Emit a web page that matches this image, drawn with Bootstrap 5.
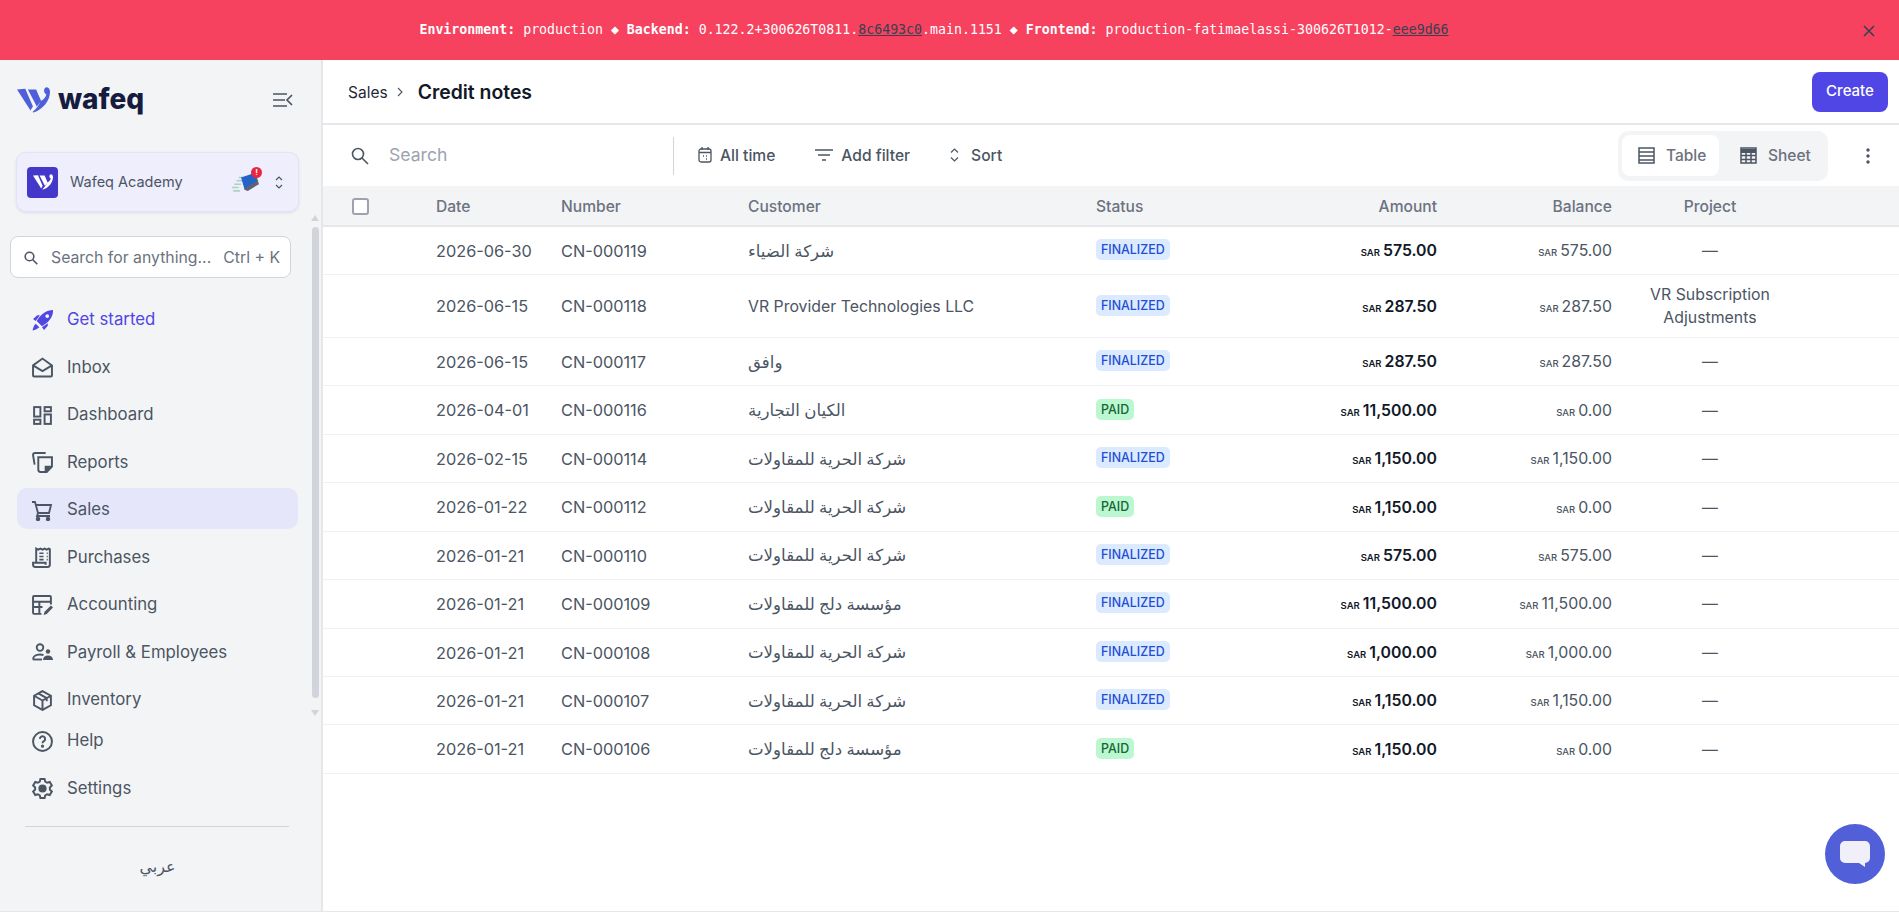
<!DOCTYPE html>
<html lang="en">
<head>
  <meta charset="UTF-8" />
  <meta name="viewport" content="width=device-width, initial-scale=1.0" />
  <title>Credit notes - wafeq</title>
  <link href="https://cdn.jsdelivr.net/npm/bootstrap@5.3.3/dist/css/bootstrap.min.css" rel="stylesheet">
  <style>
    html, body { height: 100%; overflow: hidden; }
    body { font-family: Inter, "Noto Sans", sans-serif; font-size: 15px; color: #374151; background: #fff; }
    svg { flex-shrink: 0; display: block; }

    .env-bar { height: 60px; background: #f6415f; color: #fff; font-family: "DejaVu Sans Mono", monospace; font-size: 13.25px; padding-right: 31px; }
    .env-bar a { color: #374151; }
    .env-close { right: 23px; top: 24px; }

    .app-body { height: 852px; border-bottom: 1px solid #e5e7eb; }
    .side { width: 323px; background: #f3f4f6; border-right: 2px solid #e5e7eb; }
    .brand-row { height: 76px; padding: 4px 28px 0 17px; }
    .brand-name { font-size: 28px; font-weight: 800; color: #151c3f; line-height: 1; font-family: Inter, sans-serif; margin-top: -3px; }
    .org-box { margin: 16px 0 0 16px; width: 283px; height: 60px; background: #eeeefd; border: 1px solid #e2e3f8; border-radius: 10px; padding: 0 15px 0 10px; box-shadow: 0 1px 3px rgba(30,30,80,.1); font-size: 14.5px; color: #4b5563; }
    .org-logo { width: 31px; height: 31px; border-radius: 4px; background: #4338ca; }
    .org-alert { width: 11px; height: 11px; border-radius: 50%; background: #e5273f; color: #fff; font-size: 8px; font-weight: 700; line-height: 11px; text-align: center; top: -6px; right: -3px; }
    .find-box { margin: 24px 0 0 10px; width: 281px; height: 42px; background: #fff; border: 1px solid #d1d5db; border-radius: 8px; padding: 2px 10px 0 13px; color: #6b7280; font-size: 15.8px; white-space: nowrap; }
    .find-box span:first-of-type { margin-left: 5px; }
    .nav-scroll { height: 421px; margin-top: 20px; }
    .side-link { height: 41px; margin: 0 23px 6.5px 17px; padding: 3px 0 0 15px; gap: 14px; border-radius: 10px; color: #4b5563; font-size: 16.8px; text-decoration: none; }
    .side-link svg { width: 21px; height: 21px; color: #4b5563; stroke-width: 1.85; }
    .side-link.is-accent, .side-link.is-accent svg { color: #4f46e5; }
    .side-link.is-open { background: #e6e6fb; }
    .side-track { position: absolute; right: 2px; top: 155px; width: 7px; height: 501px; }
    .side-thumb { position: absolute; left: 0; top: 12px; width: 7px; height: 471px; background: #d1d5db; border-radius: 4px; }
    .side-up, .side-down { position: absolute; left: -1px; width: 0; height: 0; border-left: 4.5px solid transparent; border-right: 4.5px solid transparent; }
    .side-up { top: 0; border-bottom: 6px solid #d1d5db; }
    .side-down { top: 495px; border-top: 6px solid #d1d5db; }
    .side-rule { margin: 18px 32px 0 25px; border-top: 1px solid #d1d5db; }
    .lang-link { margin: 27px 6px 0 0; font-size: 16px; color: #4b5563; font-family: "Noto Sans", "DejaVu Sans", sans-serif; }

    .main-pane { width: 1576px; }
    .page-head { height: 65px; border-bottom: 2px solid #e5e7eb; padding: 2px 11px 0 25px; }
    .crumb-root { font-size: 15.5px; color: #1f2937; }
    .crumb-now { font-size: 19.4px; font-weight: 600; color: #111827; margin-left: 6px; }
    .create-btn { width: 76px; height: 40px; background: #4f46e5; border: 0; border-radius: 8px; color: #fff; font-size: 15px; font-weight: 500; padding: 0; margin-top: -2px; }
    .tool-row { height: 61px; padding: 0 20px 0 28px; }
    .tool-search { width: 323px; height: 38px; border-right: 1px solid #d1d5db; color: #9ca3af; font-size: 17.6px; }
    .tool-btn { font-size: 15.6px; font-weight: 500; color: #4b5563; }
    .view-switch { background: #f3f4f6; border-radius: 10px; padding: 4px; width: 210px; height: 50px; }
    .view-tab { height: 41px; padding: 0 16px; gap: 11px; border-radius: 8px; font-size: 15.5px; font-weight: 500; color: #6b7280; }
    .view-tab.is-on { background: #fff; width: 97px; margin-right: 5px; }
    .view-tab svg { color: #4b5563; }
    .more-dots { margin: 0 9px 0 38px; }

    .notes-table { table-layout: fixed; width: 1576px; margin: 0; color: #4b5563; }
    .notes-table th { height: 40px; background: #f3f4f6; border-bottom: 2px solid #e5e7eb; padding: 2px 12px 0; font-size: 15.6px; font-weight: 500; color: #6b7280; vertical-align: middle; }
    .notes-table td { height: 48.45px; padding: 1px 12px 0; border-bottom: 1px solid #f0f1f3; font-size: 15.85px; vertical-align: middle; color: #4b5563; }
    .notes-table .row-tall td { height: 63px; }
    .notes-table .ar-name { font-family: "Noto Sans", "DejaVu Sans", sans-serif; font-size: 16.6px; }
    .notes-table .num-code { font-size: 16.3px; }
    .c1 { width: 101px; } .c2 { width: 125px; } .c3 { width: 187px; } .c4 { width: 348px; } .c5 { width: 125px; }
    .c6 { width: 240px; } .c7 { width: 175px; } .c8 { width: 172px; } .c9 { width: 103px; }
    .pick-box { display: block; width: 17px; height: 17px; margin-left: 17px; border: 2px solid #9ca3af; border-radius: 3px; background: #fff; }
    .cur-tag { font-size: 9.5px; font-weight: 500; margin-right: 3px; }
    .notes-table .money-strong { font-weight: 600; color: #111827; }
    .money-strong .cur-tag { color: #111827; font-weight: 600; }
    .state-tag { display: inline-block; font-size: 12.4px; font-weight: 500; line-height: 21px; padding: 0 5px; border-radius: 5px; transform: translateY(-2px); }
    .state-final { background: #dbeafe; color: #1d4ed8; }
    .state-paid { background: #bbf7d0; color: #166534; }
    .chat-fab { position: fixed; right: 14px; bottom: 28px; width: 60px; height: 60px; background: #5160d8; border-radius: 50%; }
  </style>
</head>
<body>

<div class="env-bar d-flex align-items-center justify-content-center position-relative">
  <div><b>Environment:</b> production ◆ <b>Backend:</b> 0.122.2+300626T0811.<a href="#">8c6493c0</a>.main.1151 ◆ <b>Frontend:</b> production-fatimaelassi-300626T1012-<a href="#">eee9d66</a></div>
  <svg class="env-close position-absolute" width="14" height="14" viewBox="0 0 14 14" fill="none" stroke="#374151" stroke-width="1.6"><path d="M2 2l10 10M12 2L2 12"/></svg>
</div>

<div class="app-body d-flex">
  <aside class="side d-flex flex-column flex-shrink-0 position-relative">
    <div class="brand-row d-flex align-items-center justify-content-between">
      <div class="d-flex align-items-center gap-2">
        <svg width="33" height="26" viewBox="0 0 100 78" fill="#4f5fd9"><path d="M0 7l25-2 23 53-7 13z"/><path d="M33 7h25l15 35-13 17z"/><path d="M88 0c8 0 12 6 12 14 0 28-22 54-50 63l-3-2c12-10 20-20 24-33 10-4 16-12 18-20-8-4-10-18-1-22z"/></svg>
        <span class="brand-name">wafeq</span>
      </div>
      <svg width="20" height="16" viewBox="0 0 20 16" fill="none" stroke="#4b5563" stroke-width="1.7"><path d="M0 2h14M0 8h12M0 14h14M19 3l-5 5 5 5"/></svg>
    </div>

    <div class="org-box d-flex align-items-center">
      <div class="org-logo d-flex align-items-center justify-content-center">
        <svg width="20" height="16" viewBox="0 0 100 78" fill="#fff"><path d="M0 7l25-2 23 53-7 13z"/><path d="M33 7h25l15 35-13 17z"/><path d="M88 0c8 0 12 6 12 14 0 28-22 54-50 63l-3-2c12-10 20-20 24-33 10-4 16-12 18-20-8-4-10-18-1-22z"/></svg>
      </div>
      <span class="ms-2 ps-1 flex-grow-1">Wafeq Academy</span>
      <div class="position-relative me-3">
        <svg width="27" height="19" viewBox="0 0 24 17"><path d="M0 13h6M1 16h6M2 10h6M4 7h5M6 4h5" stroke="#a7d3c0" stroke-width="1.400"/><path d="M10 6l12-3 2 7-10 6-3-1z" fill="#374151" opacity=".8"/><path d="M8 4l12-4 2 7-11 7z" fill="#2563c9"/></svg>
        <div class="org-alert position-absolute">!</div>
      </div>
      <svg width="8" height="15" viewBox="0 0 8 15" fill="none" stroke="#4b5563" stroke-width="1.2"><path d="M1 5l3-3 3 3M1 10l3 3 3-3"/></svg>
    </div>

    <div class="find-box d-flex align-items-center">
      <svg width="14" height="14" viewBox="0 0 14 14" fill="none" stroke="#4b5563" stroke-width="1.6"><circle cx="5.5" cy="5.5" r="4.3"/><path d="M8.8 8.8l4.5 4.5"/></svg>
      <span class="ps-2 flex-grow-1">Search for anything...</span>
      <span>Ctrl + K</span>
    </div>

    <nav class="nav-scroll overflow-hidden">
      <a class="side-link is-accent d-flex align-items-center" href="#"><svg viewBox="0 0 20 20" fill="currentColor" fill-rule="evenodd"><path d="M20 0c.3 6-3 11-10.500 15.500l-5-5C9 3 14 .2 20 0zM14.500 4a1.800 1.800 0 1 0 .01 0z"/><path d="M1 8.500L5 5h2.500l-4 5.500z"/><path d="M11.500 19l3.500-4v-2.500l-5.500 4z"/><path d="M3.500 13C2 14.500 1 17 .5 19.500c2.500-.5 5-1.500 6.500-3z"/></svg><span>Get started</span></a>
      <a class="side-link d-flex align-items-center" href="#"><svg viewBox="0 0 20 20" fill="none" stroke="currentColor" stroke-width="1.7"><path d="M1 8l9-6.500L19 8v9.500a1 1 0 0 1-1 1H2a1 1 0 0 1-1-1z"/><path d="M1 8l9 5.500L19 8"/></svg><span>Inbox</span></a>
      <a class="side-link d-flex align-items-center" href="#"><svg viewBox="0 0 20 20" fill="none" stroke="currentColor" stroke-width="1.700"><rect x="2" y="2" width="6" height="9"/><rect x="12" y="2" width="6" height="4"/><rect x="2" y="14" width="6" height="4"/><rect x="12" y="9" width="6" height="9"/></svg><span>Dashboard</span></a>
      <a class="side-link d-flex align-items-center" href="#"><svg viewBox="0 0 20 20" fill="none" stroke="currentColor" stroke-width="1.700"><path d="M6 5h13v9l-5 5H8a2 2 0 0 1-2-2z"/><path d="M13 19v-5h6" fill="currentColor"/><path d="M13 1H3a2 2 0 0 0-2 2l1.500 9"/></svg><span>Reports</span></a>
      <a class="side-link is-open d-flex align-items-center" href="#"><svg viewBox="0 0 21 21" fill="none" stroke="currentColor" stroke-width="1.700"><path d="M0 2h3l3 11h11l2-8H4.500"/><path d="M6 13l-1 3h13"/><circle cx="6" cy="19" r="1.300" fill="currentColor"/><circle cx="16" cy="19" r="1.300" fill="currentColor"/></svg><span>Sales</span></a>
      <a class="side-link d-flex align-items-center" href="#"><svg viewBox="0 0 20 20" fill="none" stroke="currentColor" stroke-width="1.700"><path d="M4 15V1.500l2 1 2-1 2 1 2-1 2 1 2-1 1 .5V17a2 2 0 0 1-2 2H3a2 2 0 0 1-2-2v-2h12v2"/><path d="M7 6h4M7 9h4M7 12h4M14 6h1M14 9h1M14 12h1" stroke-width="1.500"/></svg><span>Purchases</span></a>
      <a class="side-link d-flex align-items-center" href="#"><svg viewBox="0 0 20 20" fill="none" stroke="currentColor" stroke-width="1.700"><path d="M9 18H2a1 1 0 0 1-1-1V2a1 1 0 0 1 1-1h15a1 1 0 0 1 1 1v7"/><path d="M1 6.500h17M1 11.500h9M7 6.500V18"/><path d="M11 19l1-3 6-6 2 2-6 6z" fill="currentColor" stroke="none"/></svg><span>Accounting</span></a>
      <a class="side-link d-flex align-items-center" href="#"><svg viewBox="0 0 21 20" fill="none" stroke="currentColor" stroke-width="1.700"><circle cx="8" cy="5" r="3.300"/><path d="M1 17c0-3 3-5 7-5 1.500 0 2.500.2 3.500.6"/><path d="M1 17h9"/><circle cx="16" cy="9" r="2.200" fill="currentColor" stroke="none"/><path d="M11 17.500c0-3 2-4.500 5-4.500s5 1.500 5 4.500z" fill="currentColor" stroke="none"/></svg><span>Payroll &amp; Employees</span></a>
      <a class="side-link d-flex align-items-center" href="#"><svg viewBox="0 0 20 20" fill="none" stroke="currentColor" stroke-width="1.700"><path d="M10 1l8 4.500v9L10 19l-8-4.500v-9z"/><path d="M2 5.500l8 4.500 8-4.500M10 10v9M6 3.300l8 4.500v3"/></svg><span>Inventory</span></a>
    </nav>
    <div class="side-track"><div class="side-up"></div><div class="side-thumb"></div><div class="side-down"></div></div>

    <div class="side-foot">
      <a class="side-link d-flex align-items-center" href="#"><svg viewBox="0 0 20 20" fill="none" stroke="currentColor" stroke-width="1.700"><circle cx="10" cy="10" r="9"/><path d="M7.500 7.500a2.500 2.500 0 1 1 3.800 2.200c-.8.500-1.300 1-1.300 2"/><circle cx="10" cy="14.500" r=".6" fill="currentColor"/></svg><span>Help</span></a>
      <a class="side-link d-flex align-items-center" href="#"><svg viewBox="0 0 20 20" fill="none" stroke="currentColor" stroke-width="1.700"><path d="M8 1h4l.6 2.500 1.800 1 2.500-.7 2 3.400L17 9v2l1.900 1.800-2 3.400-2.500-.7-1.800 1L12 19H8l-.6-2.500-1.800-1-2.500.7-2-3.400L3 11V9L1.100 7.200l2-3.400 2.500.7 1.800-1z"/><circle cx="10" cy="10" r="3" fill="currentColor"/></svg><span>Settings</span></a>
      <div class="side-rule"></div>
      <div class="lang-link text-center" dir="rtl">عربي</div>
    </div>
  </aside>

  <main class="main-pane">
    <div class="page-head d-flex align-items-center justify-content-between">
      <div class="d-flex align-items-center">
        <span class="crumb-root">Sales</span>
        <svg class="mx-2" width="8" height="10" viewBox="0 0 8 10" fill="none" stroke="#4b5563" stroke-width="1.100"><path d="M2 1l4 4-4 4"/></svg>
        <span class="crumb-now">Credit notes</span>
      </div>
      <button class="create-btn" type="button">Create</button>
    </div>

    <div class="tool-row d-flex align-items-center">
      <div class="tool-search d-flex align-items-center">
        <svg width="18" height="18" viewBox="0 0 18 18" fill="none" stroke="#4b5563" stroke-width="1.600"><circle cx="7" cy="7" r="5.500"/><path d="M11 11l6 6"/></svg>
        <span class="ms-3 ps-1">Search</span>
      </div>
      <div class="tool-btn d-flex align-items-center gap-2 ms-4"><svg width="14" height="16" viewBox="0 0 14 16" fill="none" stroke="#4b5563" stroke-width="1.300"><rect x="1" y="2" width="12" height="13" rx="2"/><path d="M1 5.500h12M4 0v3M10 0v3M8 9h1M8 12h1M5 9h1"/></svg><span>All time</span></div>
      <div class="tool-btn d-flex align-items-center gap-2 ms-4 ps-3"><svg width="18" height="12" viewBox="0 0 18 12" fill="none" stroke="#4b5563" stroke-width="1.700"><path d="M0 1h18M3 6h12M7 11h4"/></svg><span>Add filter</span></div>
      <div class="tool-btn d-flex align-items-center gap-2 ms-4 ps-3"><svg width="9" height="14" viewBox="0 0 9 14" fill="none" stroke="#4b5563" stroke-width="1.200"><path d="M1 4.500L4.500 1 8 4.500M1 9.500L4.500 13 8 9.500"/></svg><span class="ms-1">Sort</span></div>
      <div class="view-switch d-flex align-items-center ms-auto">
        <div class="view-tab is-on d-flex align-items-center"><svg width="17" height="17" viewBox="0 0 17 17" fill="none" stroke="currentColor" stroke-width="1.500"><rect x="1" y="1" width="15" height="15"/><path d="M1 5h15M1 9h15M1 13h15"/></svg><span>Table</span></div>
        <div class="view-tab d-flex align-items-center"><svg width="17" height="17" viewBox="0 0 17 17" fill="none" stroke="currentColor" stroke-width="1.500"><rect x="1" y="1" width="15" height="15"/><path d="M1 4h15" stroke-width="4"/><path d="M1 8.500h15M1 12.500h15M6 6v10M11 6v10"/></svg><span>Sheet</span></div>
      </div>
      <svg class="more-dots" width="4" height="16" viewBox="0 0 4 16" fill="#4b5563"><circle cx="2" cy="2" r="1.700"/><circle cx="2" cy="8" r="1.700"/><circle cx="2" cy="14" r="1.700"/></svg>
    </div>

    <table class="table notes-table">
      <colgroup><col class="c1"><col class="c2"><col class="c3"><col class="c4"><col class="c5"><col class="c6"><col class="c7"><col class="c8"><col class="c9"></colgroup>
      <thead>
        <tr><th><span class="pick-box"></span></th><th>Date</th><th>Number</th><th>Customer</th><th>Status</th><th class="text-end">Amount</th><th class="text-end">Balance</th><th class="text-center">Project</th><th></th></tr>
      </thead>
      <tbody id="noteRows"></tbody>
    </table>
  </main>
</div>

<div class="chat-fab d-flex align-items-center justify-content-center">
  <svg width="30" height="26" viewBox="0 0 30 26" fill="#f1f0fa"><path d="M5 0h20a5 5 0 0 1 5 5v12a5 5 0 0 1-5 5v4l-6-4H5a5 5 0 0 1-5-5V5a5 5 0 0 1 5-5z"/></svg>
</div>

<script>
  const notes = [
    ["2026-06-30", "CN-000119", "شركة الضياء", "FINALIZED", "575.00", "575.00", "—"],
    ["2026-06-15", "CN-000118", "VR Provider Technologies LLC", "FINALIZED", "287.50", "287.50", "VR Subscription Adjustments"],
    ["2026-06-15", "CN-000117", "وافق", "FINALIZED", "287.50", "287.50", "—"],
    ["2026-04-01", "CN-000116", "الكيان التجارية", "PAID", "11,500.00", "0.00", "—"],
    ["2026-02-15", "CN-000114", "شركة الحرية للمقاولات", "FINALIZED", "1,150.00", "1,150.00", "—"],
    ["2026-01-22", "CN-000112", "شركة الحرية للمقاولات", "PAID", "1,150.00", "0.00", "—"],
    ["2026-01-21", "CN-000110", "شركة الحرية للمقاولات", "FINALIZED", "575.00", "575.00", "—"],
    ["2026-01-21", "CN-000109", "مؤسسة دلج للمقاولات", "FINALIZED", "11,500.00", "11,500.00", "—"],
    ["2026-01-21", "CN-000108", "شركة الحرية للمقاولات", "FINALIZED", "1,000.00", "1,000.00", "—"],
    ["2026-01-21", "CN-000107", "شركة الحرية للمقاولات", "FINALIZED", "1,150.00", "1,150.00", "—"],
    ["2026-01-21", "CN-000106", "مؤسسة دلج للمقاولات", "PAID", "1,150.00", "0.00", "—"]
  ];

  document.getElementById("noteRows").innerHTML = notes.map(n => `
    <tr class="${n[6].length > 1 ? "row-tall" : ""}">
      <td></td><td class="num-code">${n[0]}</td><td class="num-code">${n[1]}</td>
      <td class="${/^[A-Z]/.test(n[2]) ? "" : "ar-name"}">${n[2]}</td>
      <td><span class="state-tag ${n[3] === "PAID" ? "state-paid" : "state-final"}">${n[3]}</span></td>
      <td class="text-end money-strong"><span class="cur-tag">SAR</span>${n[4]}</td>
      <td class="text-end"><span class="cur-tag">SAR</span>${n[5]}</td>
      <td class="text-center">${n[6]}</td><td></td>
    </tr>`).join("");
</script>
<script src="https://cdn.jsdelivr.net/npm/bootstrap@5.3.3/dist/js/bootstrap.bundle.min.js"></script>
</body>
</html>
